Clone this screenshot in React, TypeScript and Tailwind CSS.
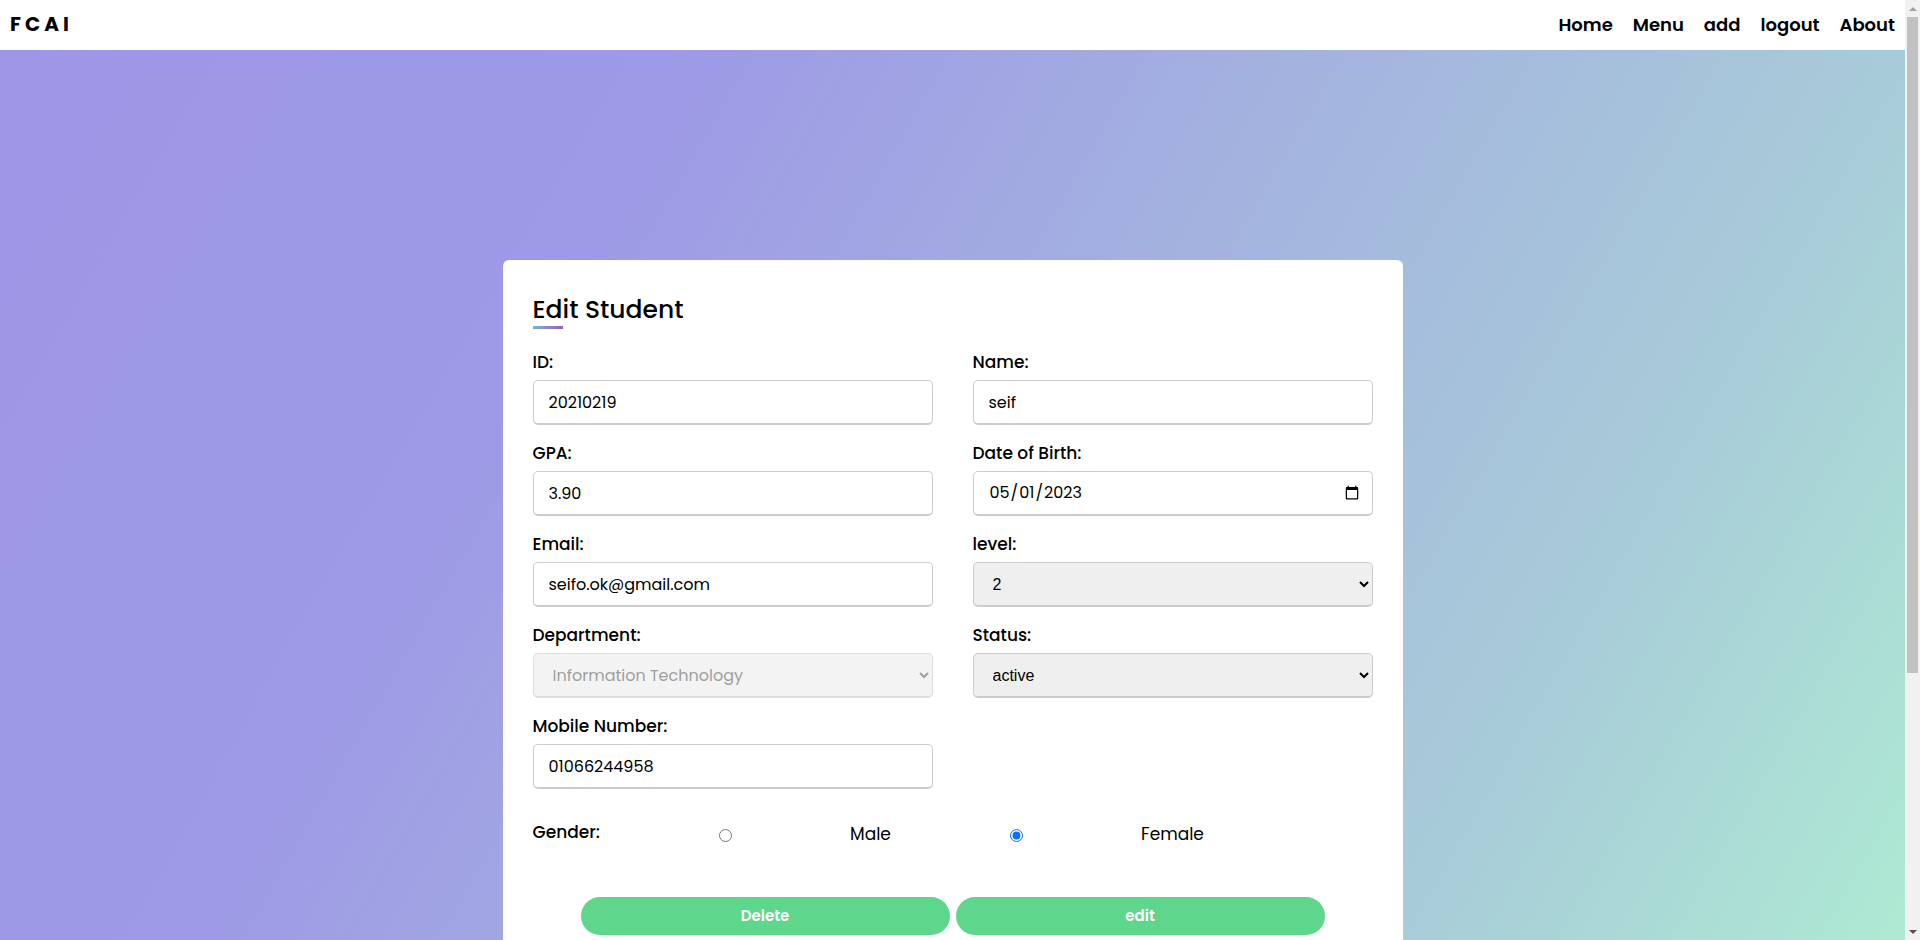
import React, { useState } from 'react';

const font = "font-['Poppins','Inter',sans-serif]";

const Field: React.FC<{ label: string; children: React.ReactNode }> = ({ label, children }) => (
  <div className="flex flex-col mb-[15px]">
    <span className="text-[17px] leading-[26px] font-medium text-black mb-[5px]">{label}</span>
    {children}
  </div>
);

const inputCls =
  "h-[45px] w-full rounded-[5px] border border-[#ccc] border-b-2 bg-white pl-[15px] text-[16px] text-black outline-none";

const selectCls =
  "h-[45px] w-full rounded-[5px] border border-[#ccc] border-b-2 bg-[#efefef] pl-[15px] pr-[8px] text-[16px] text-black outline-none font-['Liberation_Sans',Arial,sans-serif]";

// Browser scrollbar as it appears in the screenshot
const ScrollBar: React.FC = () => (
  <div className="fixed right-0 top-0 h-screen w-[15px] bg-[#f1f1f1] flex flex-col">
    <div className="h-[17px] flex items-center justify-center">
      <span className="w-0 h-0 border-l-[4px] border-r-[4px] border-b-[4px] border-l-transparent border-r-transparent border-b-[#a3a3a3]" />
    </div>
    <div className="flex-1 px-[2px]">
      <div className="h-[656px] bg-[#c1c1c1]" />
    </div>
    <div className="h-[17px] flex items-center justify-center">
      <span className="w-0 h-0 border-l-[4px] border-r-[4px] border-t-[4px] border-l-transparent border-r-transparent border-t-[#505050]" />
    </div>
  </div>
);

const App: React.FC = () => {
  const [gender, setGender] = useState('female');

  return (
    <div className={`min-h-screen ${font}`}>
      <div className="mr-[15px]">
        {/* Top bar */}
        <header className="h-[50px] bg-white flex items-center justify-between px-[10px] pb-[2px]">
          <span className="text-[20px] font-bold tracking-[4px] text-black">FCAI</span>
          <nav className="flex items-center gap-[20px] text-[18px] font-semibold text-black">
            <a href="#">Home</a>
            <a href="#">Menu</a>
            <a href="#">add</a>
            <a href="#">logout</a>
            <a href="#">About</a>
          </nav>
        </header>

        {/* Gradient section */}
        <section className="bg-fixed bg-[linear-gradient(120deg,#9d96e6_0%,#9e9ae6_30%,#a4b6de_58%,#a8cdd8_80%,#aeebd3_100%)] flex justify-center pt-[210px] pb-[300px]">
          <div className="w-[900px] bg-white rounded-[6px] px-[30px] pt-[33px] pb-[25px]">
            <div className="relative h-[38px]">
              <h2 className="text-[25px] leading-[38px] font-medium text-black -mt-[2px]">Edit Student</h2>
              <span className="absolute left-0 bottom-0 h-[3px] w-[30px] bg-[linear-gradient(135deg,#71b7e6,#9b59b6)]" />
            </div>

            <form className="mt-[20px]" onSubmit={(e) => e.preventDefault()}>
              <div className="grid grid-cols-2 gap-x-[40px]">
                <Field label="ID:">
                  <input className={inputCls} defaultValue="20210219" />
                </Field>
                <Field label="Name:">
                  <input className={inputCls} defaultValue="seif" />
                </Field>
                <Field label="GPA:">
                  <input className={inputCls} defaultValue="3.90" />
                </Field>
                <Field label="Date of Birth:">
                  <input type="date" className={`${inputCls} pr-[10px]`} defaultValue="2023-05-01" />
                </Field>
                <Field label="Email:">
                  <input className={inputCls} defaultValue="seifo.ok@gmail.com" />
                </Field>
                <Field label="level:">
                  <select className={selectCls} defaultValue="2">
                    <option value="1">1</option>
                    <option value="2">2</option>
                    <option value="3">3</option>
                    <option value="4">4</option>
                  </select>
                </Field>
                <Field label="Department:">
                  <select
                    disabled
                    className="h-[45px] w-full rounded-[5px] border border-[#ddd] border-b-2 bg-[#f3f3f3] pl-[15px] pr-[8px] text-[16px] text-[#a0a0a0] outline-none"
                    defaultValue="IT"
                  >
                    <option value="IT">Information Technology</option>
                  </select>
                </Field>
                <Field label="Status:">
                  <select className={selectCls} defaultValue="active">
                    <option value="active">active</option>
                    <option value="inactive">inactive</option>
                  </select>
                </Field>
                <Field label="Mobile Number:">
                  <input className={inputCls} defaultValue="01066244958" />
                </Field>
              </div>

              {/* Gender */}
              <div className="flex items-center mt-[16px] h-[30px]">
                <span className="w-[186px] text-[17px] font-medium text-black -mt-[4px]">Gender:</span>
                <input
                  type="radio"
                  name="gender"
                  checked={gender === 'male'}
                  onChange={() => setGender('male')}
                  className="m-0 w-[13px] h-[13px]"
                />
                <span className="w-[278px] text-center text-[17px] text-black">Male</span>
                <input
                  type="radio"
                  name="gender"
                  checked={gender === 'female'}
                  onChange={() => setGender('female')}
                  className="m-0 w-[13px] h-[13px]"
                />
                <span className="w-[300px] text-center text-[17px] text-black">Female</span>
              </div>

              <div className="flex justify-center gap-[6px] mt-[47px]">
                <button className="h-[38px] w-[369px] rounded-full bg-[#5ed68b] text-white text-[15px] font-semibold">
                  Delete
                </button>
                <button className="h-[38px] w-[369px] rounded-full bg-[#5ed68b] text-white text-[15px] font-semibold">
                  edit
                </button>
              </div>
            </form>
          </div>
        </section>
      </div>
      <ScrollBar />
    </div>
  );
};

export default App;
